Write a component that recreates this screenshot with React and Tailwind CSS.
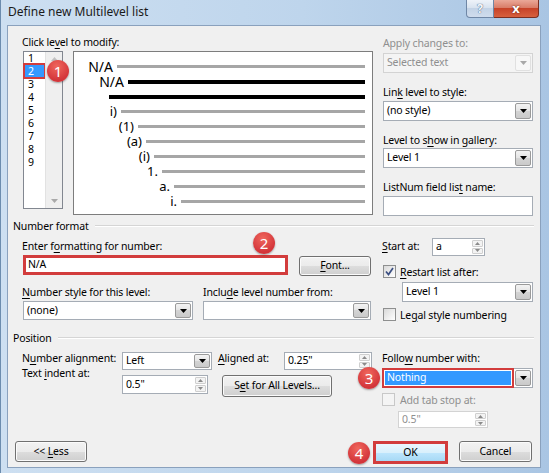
import clsx from 'clsx';

const FONT = "font-['Segoe_UI','Noto_Sans',sans-serif]";

const U = ({ children }) => <span className="underline underline-offset-[2px] decoration-1">{children}</span>;

const Label = ({ children, dim, className }) => (
  <div className={clsx('h-[12px] leading-[12px] whitespace-nowrap', dim && 'text-[#8f8f8f]', className)}>{children}</div>
);

const Arrow = ({ dim }) => (
  <svg width="7" height="4" viewBox="0 0 7 4">
    <path d="M0 0h7L3.5 4z" fill={dim ? '#a8a8a8' : '#000'} />
  </svg>
);

const DropBtn = ({ dim }) => (
  <div
    className={clsx(
      'w-[16px] m-px flex items-center justify-center rounded-[2px] border',
      dim ? 'border-[#e0e0e0] bg-[#f7f7f7]' : 'border-[#9a9a9a] bg-[linear-gradient(#f3f3f3,#e4e4e4_50%,#d4d4d4_50%,#cacaca)]'
    )}
  >
    <Arrow dim={dim} />
  </div>
);

const Select = ({ value, dim, className }) => (
  <div className={clsx('flex border', dim ? 'border-[#d3d3d3] bg-[#f4f4f4] text-[#8f8f8f]' : 'border-[#a5acb5] bg-white', className)}>
    <div className="flex-1 flex items-center pl-[3px] whitespace-nowrap">{value}</div>
    <DropBtn dim={dim} />
  </div>
);

const SpinArrow = ({ up }) => (
  <svg width="5" height="3" viewBox="0 0 5 3">
    <path d={up ? 'M0 3h5L2.5 0z' : 'M0 0h5L2.5 3z'} fill="#8a8a8a" />
  </svg>
);

const Spin = ({ value, dim, className }) => (
  <div className={clsx('flex border bg-white', dim ? 'border-[#d3d3d3] text-[#8f8f8f]' : 'border-[#a5acb5]', className)}>
    <div className="flex-1 flex items-center pl-[3px] whitespace-nowrap">{value}</div>
    <div className="w-[11px] my-px mr-px flex flex-col gap-px">
      <div className="flex-1 flex items-center justify-center border border-[#cfcfcf] rounded-[1px] bg-[#f3f3f3]">
        <SpinArrow up />
      </div>
      <div className="flex-1 flex items-center justify-center border border-[#cfcfcf] rounded-[1px] bg-[#f3f3f3]">
        <SpinArrow />
      </div>
    </div>
  </div>
);

const Check = ({ checked, dim }) => (
  <div
    className={clsx(
      'w-[13px] h-[13px] border flex items-center justify-center',
      dim ? 'border-[#c8c8c8] bg-[#f4f4f4]' : 'border-[#8e8f8f] bg-[linear-gradient(135deg,#d9d9d9,#ffffff)]'
    )}
  >
    {checked && (
      <svg width="9" height="9" viewBox="0 0 9 9">
        <path d="M1 4.5l2.5 3L8 1" stroke="#3b4f82" strokeWidth="1.7" fill="none" />
      </svg>
    )}
  </div>
);

const Btn = ({ children, className }) => (
  <div
    className={clsx(
      'flex items-center justify-center rounded-[3px] border border-[#707070] shadow-[inset_0_0_0_1px_#fbfbfb] bg-[linear-gradient(#f2f2f2,#ebebeb_50%,#dddddd_50%,#cfcfcf)]',
      className
    )}
  >
    <span className="whitespace-pre">{children}</span>
  </div>
);

const Badge = ({ n, className }) => (
  <div
    className={clsx(
      'absolute w-[22px] h-[22px] rounded-full flex items-center justify-center text-white text-[15px] leading-none tracking-normal bg-[radial-gradient(circle_at_45%_30%,#f0675d,#d3353a_70%)] shadow-[0_1px_2px_rgba(0,0,0,0.35)]',
      className
    )}
  >
    {n}
  </div>
);

const Header = ({ children, className }) => (
  <div className={clsx('flex items-center h-[12px] ml-[5px] mr-[6px]', className)}>
    <span className="leading-[12px] whitespace-nowrap">{children}</span>
    <div className="flex-1 ml-[6px] h-[2px] border-t border-[#d5d5d5] border-b-white border-b" />
  </div>
);

const PREVIEW = [
  { text: 'N/A', w: 'w-[43px]', size: 'text-[14px]', bold: false },
  { text: 'N/A', w: 'w-[54px]', size: 'text-[14px]', bold: true },
  { text: '', w: 'w-[35px]', size: 'text-[13px]', bold: true },
  { text: 'i)', w: 'w-[47px]', size: 'text-[13px]', bold: false },
  { text: '(1)', w: 'w-[64px]', size: 'text-[13px]', bold: false },
  { text: '(a)', w: 'w-[72px]', size: 'text-[13px]', bold: false },
  { text: '(i)', w: 'w-[80px]', size: 'text-[13px]', bold: false },
  { text: '1.', w: 'w-[88px]', size: 'text-[13px]', bold: false },
  { text: 'a.', w: 'w-[100px]', size: 'text-[13px]', bold: false },
  { text: 'i.', w: 'w-[107px]', size: 'text-[13px]', bold: false },
];

export default function App() {
  return (
    <div
      className={clsx(
        FONT,
        'relative w-[549px] h-[473px] overflow-hidden text-[10.5px] tracking-[-0.15px] text-black border-l border-[#6c8cae] bg-[linear-gradient(90deg,#cddff1,#bed5ec_55%,#a9c5e3)]'
      )}
    >
      {/* Title bar */}
      <div className="flex h-[25px] items-start">
        <div className="pl-[7px] pt-[5px] text-[12px] tracking-normal leading-[14px] text-[#1a1a1a] whitespace-nowrap">Define new Multilevel list</div>
        <div className="ml-auto mr-[10px] flex">
          <div className="w-[28px] h-[18px] flex items-center justify-center rounded-bl-[4px] border border-t-0 border-[#6f87a6] bg-[linear-gradient(#eef3f9,#d6e1ee_50%,#c3d3e6_50%,#cfdced)] text-[12px] font-bold text-[#f7f9fc] [text-shadow:0_0_1px_#4a6485,0_0_1px_#4a6485]">
            ?
          </div>
          <div className="w-[45px] h-[18px] flex items-center justify-center rounded-br-[4px] border border-t-0 border-l-0 border-[#7a2f22] bg-[linear-gradient(#eaa898,#d77863_50%,#c74328_50%,#d7603e)] text-[13px] font-bold text-white [text-shadow:0_0_2px_#5a1a10]">
            x
          </div>
        </div>
      </div>

      {/* Dialog body */}
      <div className="ml-[6px] w-[534px] h-[443px] border border-[#8aa1bd] bg-[#f0f0f0] flex flex-col">
        {/* Level list + preview + right side */}
        <div className="flex h-[190px]">
          <div className="ml-[14px] w-[351px] pt-[10px]">
            <Label>
              Click le<U>v</U>el to modify:
            </Label>
            <div className="flex mt-[3px] items-start">
              <div className="ml-[1px] w-[40px] h-[158px] border border-[#828790] bg-white flex">
                <div className="flex-1 flex flex-col -mt-[1px] text-[10.5px]">
                  {[1, 2, 3, 4, 5, 6, 7, 8, 9].map((n) => (
                    <div key={n} className="h-[13px] flex items-center pl-[1px]">
                      <div
                        className={clsx(
                          'w-[19px] h-[12px] leading-[12px] pl-[3px]',
                          n === 2 && 'bg-[#3399ff] text-white outline-2 outline-[#d23c3c]'
                        )}
                      >
                        {n}
                      </div>
                    </div>
                  ))}
                </div>
                <div className="w-[17px] bg-[#efefef] border-l border-[#e2e2e2] flex flex-col items-center justify-between py-[5px]">
                  <svg width="7" height="4" viewBox="0 0 7 4">
                    <path d="M0 4h7L3.5 0z" fill="#c2c2c2" />
                  </svg>
                  <svg width="7" height="4" viewBox="0 0 7 4">
                    <path d="M0 0h7L3.5 4z" fill="#a9a9a9" />
                  </svg>
                </div>
              </div>
              <div className="ml-[10px] w-[300px] h-[164px] border border-[#7d7d7d] bg-white pt-[7px] tracking-normal font-['Noto_Sans',sans-serif]">
                {PREVIEW.map((row, i) => (
                  <div key={i} className="flex items-center h-[15px]">
                    <div className={clsx('text-right pr-[4px] leading-[15px] whitespace-nowrap', row.w, row.size)}>{row.text}</div>
                    <div className={clsx('flex-1 mr-[7px]', row.bold ? 'h-[4px] bg-black' : 'h-[3px] bg-[#a6a6a6]')} />
                  </div>
                ))}
              </div>
            </div>
          </div>

          <div className="ml-[10px] w-[150px] pt-[11px]">
            <Label dim>Apply changes to:</Label>
            <Select dim value="Selected text" className="mt-[4px] h-[20px]" />
            <Label className="mt-[13px]">
              Lin<U>k</U> level to style:
            </Label>
            <Select value="(no style)" className="mt-[3px] h-[20px]" />
            <Label className="mt-[13px]">
              Level to s<U>h</U>ow in gallery:
            </Label>
            <Select value="Level 1" className="mt-[2px] h-[20px]" />
            <Label className="mt-[13px]">
              ListNum field lis<U>t</U> name:
            </Label>
            <div className="mt-[3px] h-[20px] border border-[#a5acb5] bg-white" />
          </div>
        </div>

        <Header className="mt-[4px]">Number format</Header>

        {/* Number format */}
        <div className="flex h-[100px]">
          <div className="ml-[14px] w-[349px] pt-[8px]">
            <Label>
              Enter f<U>o</U>rmatting for number:
            </Label>
            <div className="flex mt-[3px] items-start">
              <div className="ml-[1px] w-[265px] h-[20px] border-[3px] border-[#d23c3c] bg-white flex items-center pl-[2px]">N/A</div>
              <Btn className="ml-[11px] mt-[1px] w-[72px] h-[20px]">
                <U>F</U>ont...
              </Btn>
            </div>
            <div className="flex mt-[10px]">
              <Label className="w-[181px]">
                <U>N</U>umber style for this level:
              </Label>
              <Label>
                Inclu<U>d</U>e level number from:
              </Label>
            </div>
            <div className="flex mt-[3px]">
              <Select value="(none)" className="ml-[1px] w-[170px] h-[19px]" />
              <Select value="" className="ml-[10px] w-[168px] h-[19px]" />
            </div>
          </div>

          <div className="ml-[11px] w-[151px] pt-[6px]">
            <div className="flex items-center h-[18px]">
              <Label className="w-[50px] -mt-[3px]">
                <U>S</U>tart at:
              </Label>
              <Spin value="a" className="w-[53px] h-[18px]" />
            </div>
            <div className="flex items-center mt-[9px] h-[13px]">
              <div className="ml-[1px]">
                <Check checked />
              </div>
              <Label className="ml-[4px]">
                <U>R</U>estart list after:
              </Label>
            </div>
            <Select value="Level 1" className="ml-[20px] mt-[4px] w-[131px] h-[20px]" />
            <div className="flex items-center mt-[6px] h-[13px]">
              <div className="ml-[1px]">
                <Check />
              </div>
              <Label className="ml-[4px]">
                Le<U>g</U>al style numbering
              </Label>
            </div>
          </div>
        </div>

        <Header>Position</Header>

        {/* Position */}
        <div className="flex h-[97px]">
          <div className="ml-[14px] w-[350px] pt-[8px]">
            <div className="flex h-[18px]">
              <Label className="w-[100px]">
                N<U>u</U>mber alignment:
              </Label>
              <Select value="Left" className="w-[90px] h-[18px]" />
              <Label className="ml-[6px] w-[66px]">
                <U>A</U>ligned at:
              </Label>
              <Spin value={'0.25"'} className="w-[88px] h-[18px]" />
            </div>
            <div className="flex -mt-[3px] items-start">
              <Label className="w-[100px]">
                Text <U>i</U>ndent at:
              </Label>
              <Spin value={'0.5"'} className="mt-[8px] w-[86px] h-[19px]" />
              <Btn className="ml-[14px] mt-[8px] w-[110px] h-[22px]">
                S<U>e</U>t for All Levels...
              </Btn>
            </div>
          </div>

          <div className="ml-[10px] w-[151px] pt-[8px]">
            <Label>
              Follo<U>w</U> number with:
            </Label>
            <div className="mt-[4px] h-[20px] flex">
              <div className="flex-1 border-[2px] border-[#d23c3c] bg-white p-px flex">
                <div className="flex-1 bg-[#3399ff] text-white flex items-center pl-[2px]">Nothing</div>
              </div>
              <div className="flex border border-l-0 border-[#a5acb5] bg-white">
                <DropBtn />
              </div>
            </div>
            <div className="flex items-center mt-[5px] h-[13px]">
              <Check dim />
              <Label dim className="ml-[5px]">
                Add tab stop at:
              </Label>
            </div>
            <Spin dim value={'0.5"'} className="ml-[16px] mt-[5px] w-[90px] h-[17px]" />
          </div>
        </div>

        {/* Buttons */}
        <div className="flex items-start h-[24px]">
          <Btn className="ml-[7px] w-[72px] h-[21px]">
            {'<< '}
            <U>L</U>ess
          </Btn>
          <div className="ml-[286px] w-[75px] h-[23px] border-[3px] border-[#d23c3c] bg-[linear-gradient(#eaf6fd,#d9f0fc_50%,#bee6fd_50%,#a7d9f5)] flex items-center justify-center">
            OK
          </div>
          <Btn className="ml-[11px] w-[73px] h-[21px]">Cancel</Btn>
        </div>
      </div>

      <Badge n="1" className="left-[46px] top-[60px]" />
      <Badge n="2" className="left-[252px] top-[232px]" />
      <Badge n="3" className="left-[357px] top-[367px]" />
      <Badge n="4" className="left-[347px] top-[442px]" />
    </div>
  );
}
